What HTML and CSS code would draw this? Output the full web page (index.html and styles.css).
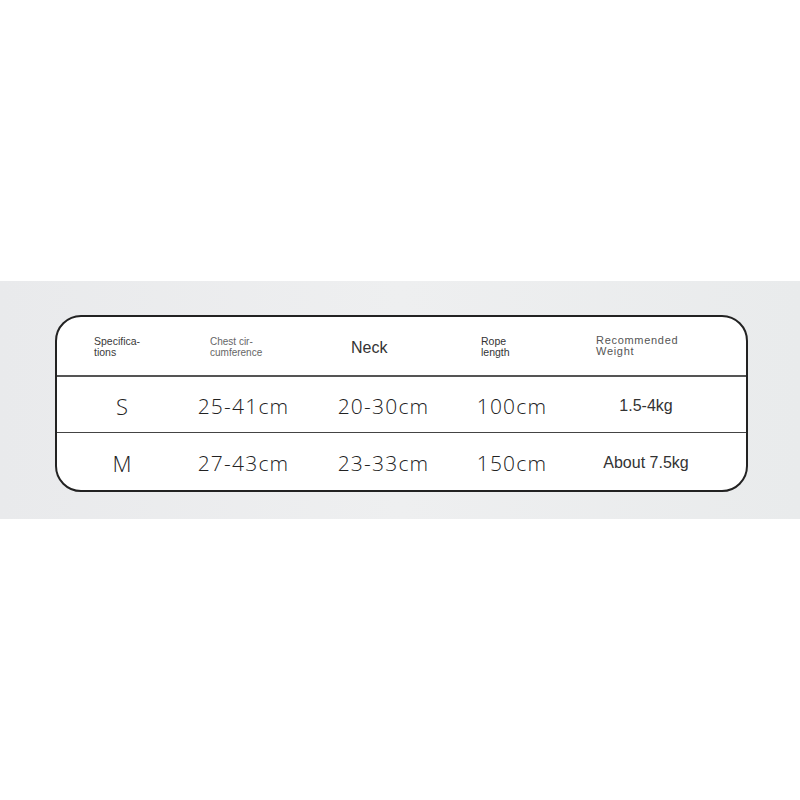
FILE: index.html
```html
<!DOCTYPE html>
<html>
<head>
<meta charset="utf-8">
<link rel="stylesheet" href="styles.css">
</head>
<body>
<div class="top"></div>
<div class="band">
  <div class="card">
    <div class="row head">
      <div class="cell h1"><span class="htxt spec">Specifica-<br>tions</span></div>
      <div class="cell h2"><span class="htxt chest">Chest cir-<br>cumference</span></div>
      <div class="cell h3"><span class="htxt neck">Neck</span></div>
      <div class="cell h4"><span class="htxt rope">Rope<br>length</span></div>
      <div class="cell h5"><span class="htxt weight">Recommended<br>Weight</span></div>
      <div class="cell"></div>
    </div>
    <div class="row data line">
      <div class="cell c size">S</div>
      <div class="cell c num">25-41cm</div>
      <div class="cell c num">20-30cm</div>
      <div class="cell c num">100cm</div>
      <div class="cell c kg">1.5-4kg</div>
      <div class="cell"></div>
    </div>
    <div class="row data last">
      <div class="cell c size">M</div>
      <div class="cell c num">27-43cm</div>
      <div class="cell c num">23-33cm</div>
      <div class="cell c num">150cm</div>
      <div class="cell c kg">About 7.5kg</div>
      <div class="cell"></div>
    </div>
  </div>
</div>
</body>
</html>
```

FILE: styles.css
```css
html, body {
  margin: 0;
  padding: 0;
  background: #ffffff;
}
.top {
  height: 281px;
}
.band {
  height: 238px;
  box-sizing: border-box;
  background: linear-gradient(90deg, #e9eaec 0%, #eeeff0 50%, #e9ebec 100%);
  padding: 34px 0 0 55px;
}
.card {
  width: 693px;
  box-sizing: border-box;
  border: 2px solid #222;
  border-radius: 26px;
  background: #fff;
  overflow: hidden;
}
.row {
  display: grid;
  grid-template-columns: 130px 113px 167px 90px 178px 1fr;
}
.head {
  height: 60px;
  border-bottom: 2px solid #555;
  box-sizing: border-box;
}
.row.line {
  height: 56px;
  border-bottom: 1.5px solid #444;
  box-sizing: border-box;
}
.row.last {
  height: 57px;
}
.cell {
  display: flex;
  align-items: center;
}
.cell.c {
  justify-content: center;
}
.htxt {
  font-family: "Liberation Sans", Arial, sans-serif;
  font-size: 10px;
  line-height: 11px;
  color: #444;
}
.h1 { padding-left: 37px; padding-top: 1px; }
.h2 { padding-left: 23px; padding-top: 2px; }
.h3 { padding-left: 51px; padding-top: 3px; }
.h4 { padding-left: 14px; padding-top: 1px; }
.h5 { padding-left: 39px; padding-top: 0; }
.spec { font-size: 10.5px; color: #3a3a3a; }
.chest { font-size: 10px; color: #666; }
.neck { font-size: 16px; line-height: 18px; color: #333; }
.rope { font-size: 10.5px; color: #333; }
.weight { font-size: 11px; line-height: 11px; color: #555; letter-spacing: 0.7px; }
.size, .num {
  font-family: "Open Sans", "DejaVu Sans", sans-serif;
  font-weight: 350;
  font-size: 21px;
  letter-spacing: 1.2px;
  color: #222;
}
.size { font-size: 22px; letter-spacing: 0; }
.kg {
  font-family: "Liberation Sans", Arial, sans-serif;
  font-size: 16px;
  color: #333;
}
.data .cell.c { padding-top: 2px; }
```
